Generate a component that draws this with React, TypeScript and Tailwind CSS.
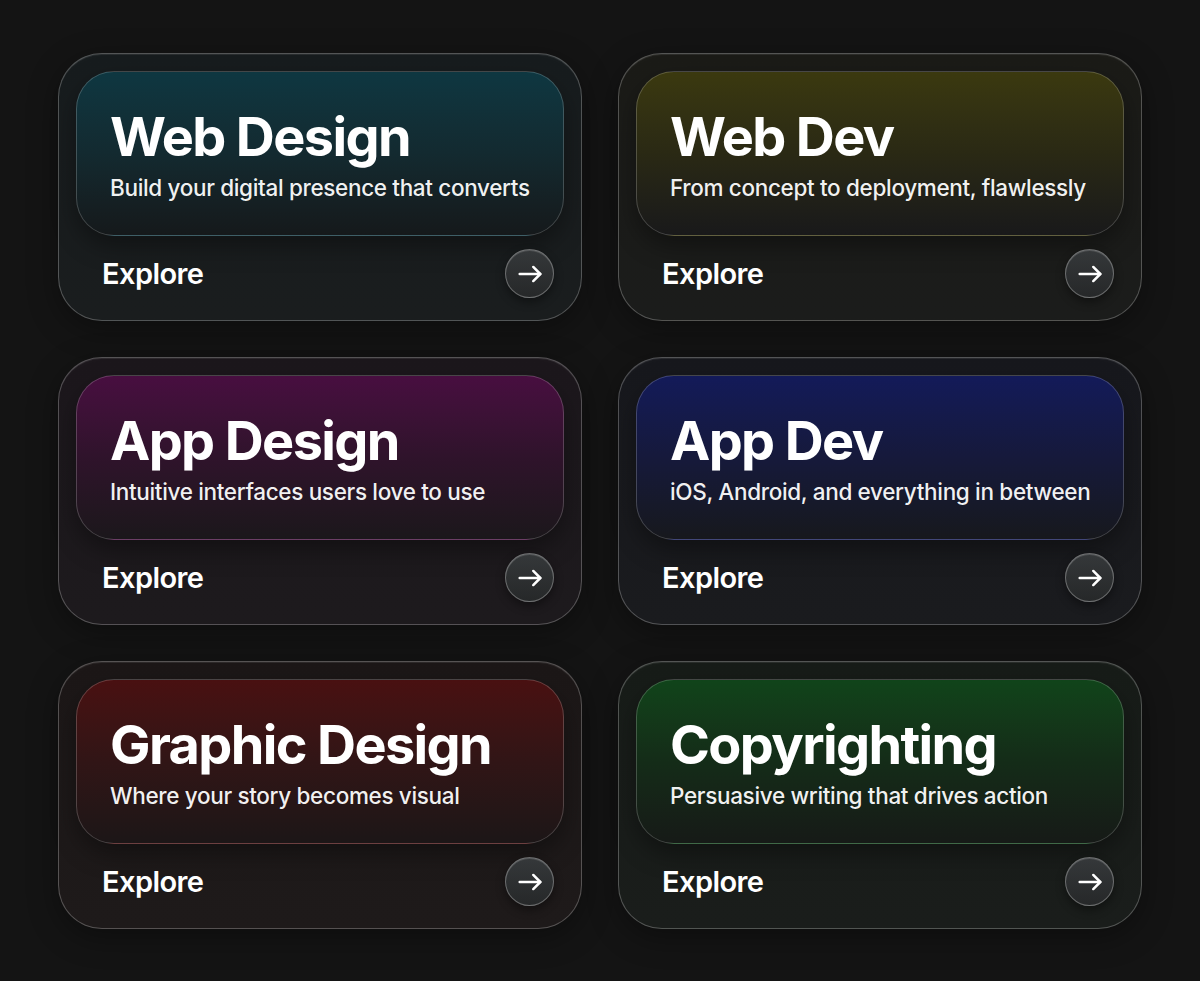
type Service = {
    title: string
    subtitle: string
    panel: string
    outer: string
}

const services: Service[] = [
    {
        title: "Web Design",
        subtitle: "Build your digital presence that converts",
        panel: "bg-linear-to-b from-[#0e3741] via-[#132a30] to-[#15191b]",
        outer: "bg-linear-to-b from-[#171c1e] to-[#1a1d1e]",
    },
    {
        title: "Web Dev",
        subtitle: "From concept to deployment, flawlessly",
        panel: "bg-linear-to-b from-[#3b390f] via-[#2a2914] to-[#19191a]",
        outer: "bg-linear-to-b from-[#1b1b17] to-[#1b1c1b]",
    },
    {
        title: "App Design",
        subtitle: "Intuitive interfaces users love to use",
        panel: "bg-linear-to-b from-[#480e40] via-[#2f132b] to-[#1b171b]",
        outer: "bg-linear-to-b from-[#1c171c] to-[#1d1a1d]",
    },
    {
        title: "App Dev",
        subtitle: "iOS, Android, and everything in between",
        panel: "bg-linear-to-b from-[#131a59] via-[#16193b] to-[#17181d]",
        outer: "bg-linear-to-b from-[#17181d] to-[#1a1b1e]",
    },
    {
        title: "Graphic Design",
        subtitle: "Where your story becomes visual",
        panel: "bg-linear-to-b from-[#491011] via-[#311516] to-[#1c1617]",
        outer: "bg-linear-to-b from-[#1c1717] to-[#1e1a1a]",
    },
    {
        title: "Copyrighting",
        subtitle: "Persuasive writing that drives action",
        panel: "bg-linear-to-b from-[#10441a] via-[#142c18] to-[#161a17]",
        outer: "bg-linear-to-b from-[#171c18] to-[#1a1d1b]",
    },
]

const Arrow = () => (
    <svg width="26" height="26" viewBox="0 0 24 24" fill="none" stroke="white" strokeWidth="2.3" strokeLinecap="round" strokeLinejoin="round">
        <path d="M2.5 12h19"/>
        <path d="M15 5.5l6.5 6.5-6.5 6.5"/>
    </svg>
)

const ServiceCard = ({service}: {service: Service}) => {
    return (
        <div className={`h-[268px] rounded-[44px] border border-white/25 p-[17px] pb-0 flex flex-col shadow-[inset_0_1px_0_rgba(255,255,255,0.08),0_8px_30px_rgba(0,0,0,0.35)] ${service.outer}`}>
            <div className={`h-[165px] shrink-0 rounded-[38px] border border-white/20 pl-[33px] pt-[38px] shadow-[0_10px_24px_rgba(0,0,0,0.35)] ${service.panel}`}>
                <h2 className="text-[54px] leading-none font-bold tracking-[-0.03em] text-white">{service.title}</h2>
                <p className="mt-[10px] text-[22.5px] leading-[28px] font-medium tracking-[-0.015em] text-white/95">{service.subtitle}</p>
            </div>
            <div className="flex-1 flex items-center justify-between pl-[26px] pr-[10px] pb-[8px]">
                <span className="text-[29px] font-semibold tracking-[-0.02em] text-white">Explore</span>
                <button className="w-[49px] h-[49px] rounded-full border border-white/30 bg-linear-to-b from-[#35383a] to-[#262829] flex items-center justify-center shadow-[inset_0_1px_0_rgba(255,255,255,0.15),0_4px_10px_rgba(0,0,0,0.4)]">
                    <Arrow/>
                </button>
            </div>
        </div>
    )
}

const App = () => {
    return (
        <div className="min-h-screen bg-[#141414] flex items-center justify-center font-['Inter',sans-serif]">
            <div className="grid grid-cols-2 gap-x-[36px] gap-y-[36px] w-[1084px]">
                {services.map((s) => <ServiceCard key={s.title} service={s}/>)}
            </div>
        </div>
    )
}

export default App;
